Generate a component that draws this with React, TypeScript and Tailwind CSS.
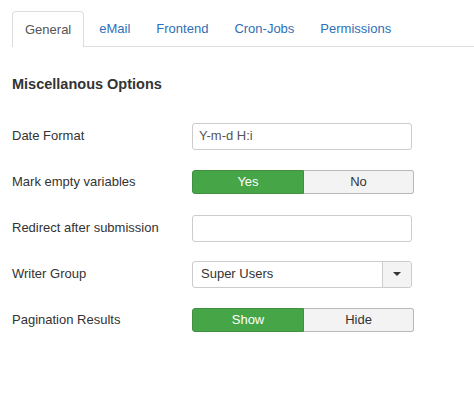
import React from "react";

const TABS = ["General", "eMail", "Frontend", "Cron-Jobs", "Permissions"];

const Toggle: React.FC<{ on: string; off: string }> = ({ on, off }) => (
  <div className="flex h-[24px] w-[222px] text-[13px]">
    <div className="flex w-[112px] items-center justify-center rounded-l-[3px] border border-[#3f8f3f] bg-[#46a546] text-white">
      {on}
    </div>
    <div className="flex flex-1 items-center justify-center rounded-r-[3px] border border-l-0 border-[#b8b8b8] bg-[#f3f3f3] text-[#333]">
      {off}
    </div>
  </div>
);

const TextInput: React.FC<{ value?: string }> = ({ value }) => (
  <div className="flex h-[27px] w-[220px] items-center rounded-[3px] border border-[#cccccc] bg-white pl-[6px] text-[13px] text-[#555]">
    {value}
  </div>
);

const Row: React.FC<{ label: string; children: React.ReactNode }> = ({ label, children }) => (
  <div className="flex h-[46px] items-center">
    <div className="w-[180px] text-[13px] text-[#333]">{label}</div>
    {children}
  </div>
);

export default function App() {
  return (
    <div
      className="h-[407px] w-[474px] bg-white pl-[12px]"
      style={{ fontFamily: '"Liberation Sans", Arial, sans-serif' }}
    >
      {/* Tabs */}
      <div className="flex h-[47px] items-end border-b border-[#dddddd] pt-[11px]">
        {TABS.map((t, i) => (
          <div
            key={t}
            className={
              i === 0
                ? "-mb-px mr-[3px] flex h-[36px] items-center rounded-t-[4px] border border-b-0 border-[#dddddd] bg-white px-[12px] text-[13px] text-[#555]"
                : "mr-[2px] flex h-[35px] items-center px-[12px] text-[13px] text-[#2f6fb7]"
            }
          >
            {t}
          </div>
        ))}
      </div>

      <div className="mt-[28px] h-[18px] text-[14.5px] font-bold leading-[18px] text-[#333]">
        Miscellanous Options
      </div>

      <div className="mt-[20px] flex flex-col">
        <Row label="Date Format">
          <TextInput value="Y-m-d H:i" />
        </Row>
        <Row label="Mark empty variables">
          <Toggle on="Yes" off="No" />
        </Row>
        <Row label="Redirect after submission">
          <TextInput />
        </Row>
        <Row label="Writer Group">
          <div className="flex h-[27px] w-[220px] rounded-[3px] border border-[#cccccc] bg-white text-[13px] text-[#333]">
            <div className="flex flex-1 items-center pl-[8px]">Super Users</div>
            <div className="flex w-[29px] items-center justify-center rounded-r-[3px] border-l border-[#cccccc] bg-[#f3f3f3]">
              <svg width="8" height="4" viewBox="0 0 8 4">
                <path d="M0 0 L8 0 L4 4 Z" fill="#333" />
              </svg>
            </div>
          </div>
        </Row>
        <Row label="Pagination Results">
          <Toggle on="Show" off="Hide" />
        </Row>
      </div>
    </div>
  );
}
